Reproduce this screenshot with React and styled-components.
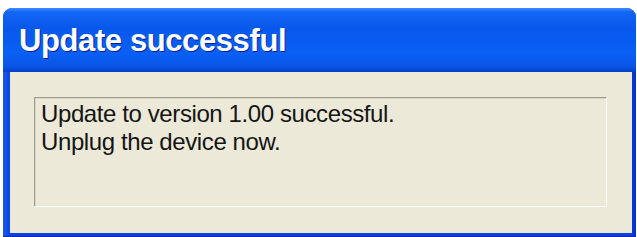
import React from "react";
import styled, { createGlobalStyle } from "styled-components";

const Global = createGlobalStyle`
  html, body {
    margin: 0;
    padding: 0;
    background: #ffffff;
  }
  body {
    width: 637px;
    height: 237px;
    overflow: hidden;
  }
`;

const Page = styled.div`
  padding: 8px 1px 0 3px;
`;

const Window = styled.div`
  height: 228px;
  display: flex;
  flex-direction: column;
  border-radius: 9px 9px 0 0;
  background: linear-gradient(to right, #1a5ae6, #0a3fe0 8px, #0a3fe0 calc(100% - 5px), #0731c4);
  border-bottom: 1px solid #0a2aa8;
  overflow: hidden;
`;

const TitleBar = styled.div`
  height: 64px;
  flex: none;
  display: flex;
  align-items: center;
  padding: 2px 0 0 16px;
  box-sizing: border-box;
  background: linear-gradient(
    to bottom,
    #3c8cff 0px,
    #1466f4 4px,
    #0858ec 20px,
    #0a5ff4 45px,
    #0a56e6 58px,
    #0640c8 64px
  );
`;

const Title = styled.h1`
  margin: 0;
  font-family: "Liberation Sans", Arial, sans-serif;
  font-weight: bold;
  font-size: 31px;
  line-height: 34px;
  letter-spacing: -0.4px;
  color: #ffffff;
  text-shadow: 1px 1px 0 #0a2090;
`;

const Body = styled.div`
  flex: 1;
  margin: 0 4px 3px 7px;
  background: #ece9d8;
  padding: 25px 25px 26px 24px;
  display: flex;
`;

const Frame = styled.div`
  flex: 1;
  border-top: 1px solid #a09d8f;
  border-left: 1px solid #a09d8f;
  border-right: 1px solid #ffffff;
  border-bottom: 1px solid #ffffff;
  box-shadow: inset 1px 1px 0 #d8d5c6;
  padding: 2px 0 0 6px;
`;

const Message = styled.p`
  margin: 0;
  font-family: "Liberation Sans", Arial, sans-serif;
  font-size: 24px;
  line-height: 28px;
  letter-spacing: -0.4px;
  color: #151515;
`;

export default function App() {
  return (
    <>
      <Global />
      <Page>
        <Window>
          <TitleBar>
            <Title>Update successful</Title>
          </TitleBar>
          <Body>
            <Frame>
              <Message>Update to version 1.00 successful.</Message>
              <Message>Unplug the device now.</Message>
            </Frame>
          </Body>
        </Window>
      </Page>
    </>
  );
}
